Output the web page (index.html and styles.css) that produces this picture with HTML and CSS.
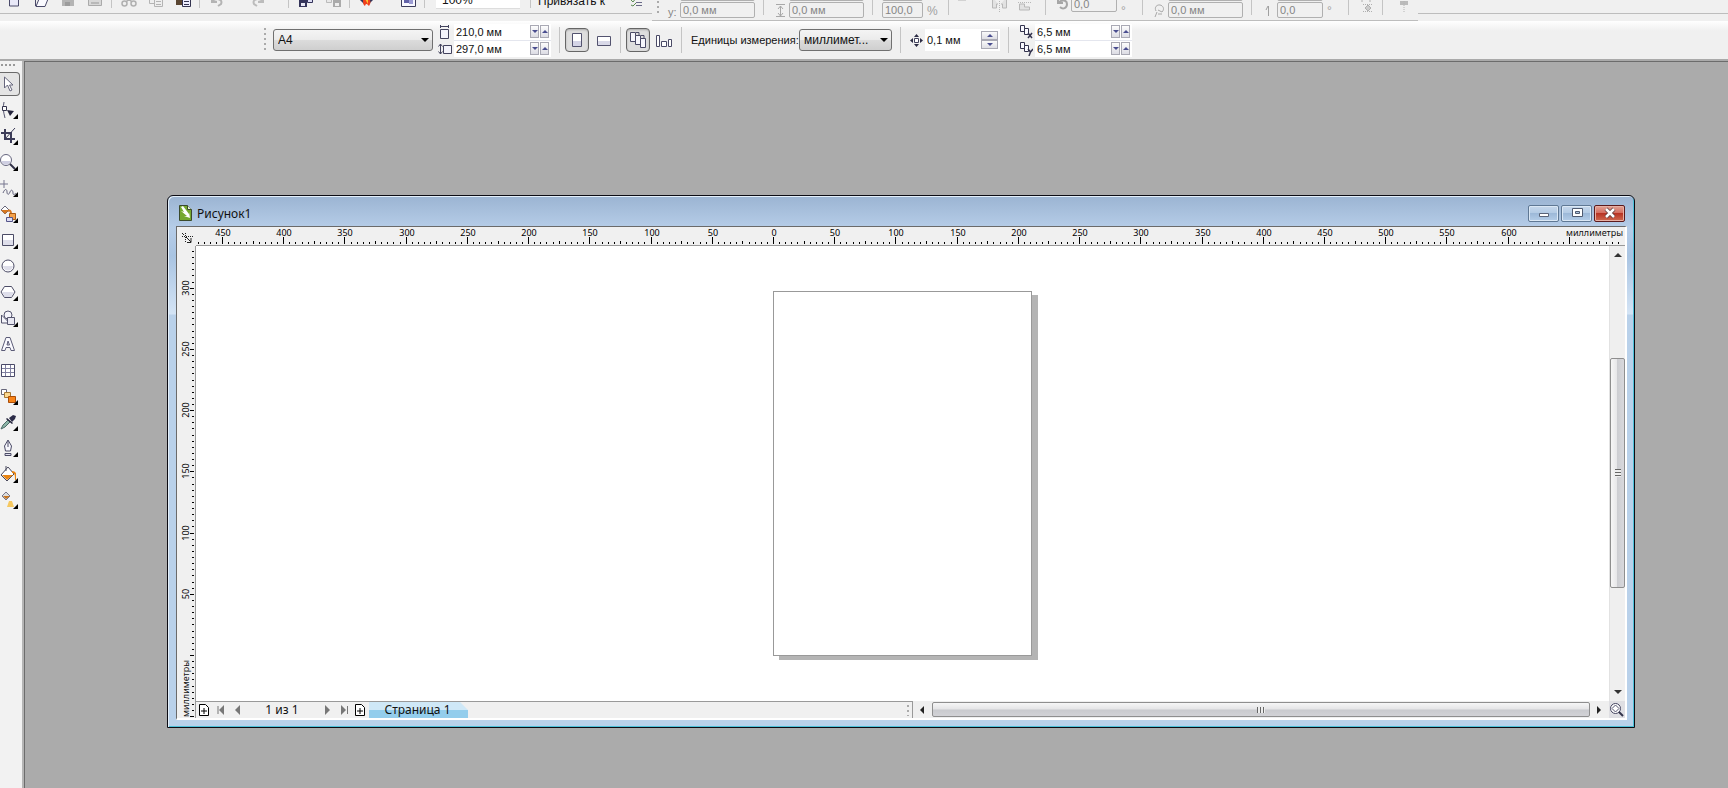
FILE: index.html
```html
<!DOCTYPE html>
<html lang="ru">
<head>
<meta charset="utf-8">
<title>Рисунок1</title>
<link rel="stylesheet" href="styles.css">
</head>
<body>
<div class="app">
  <header class="bars">
    <div class="strip">
      <div class="standard" role="toolbar" aria-label="Стандартная">
        <button class="tb" aria-label="Создать"><svg width="16" height="16"><path d="M3.500-2v17h9V-2" fill="#e9e9f8" stroke="#4a4a6a"/></svg></button>
        <button class="tb" aria-label="Открыть"><svg width="16" height="16"><path d="M2.500 15V8M3 15.500h9l3-7.500H6z" fill="#fafaff" stroke="#4a4a6a"/></svg></button>
        <button class="tb" aria-label="Сохранить" disabled><svg width="16" height="16"><path d="M2 3h12v12H2z" fill="#b4b4b4"/><path d="M5 11h5v4H5z" fill="#9c9c9c"/></svg></button>
        <button class="tb" aria-label="Печать" disabled><svg width="16" height="16"><path d="M1.500 8.500h13v6h-13z" fill="#d8d8d8" stroke="#aaa"/><path d="M4 12h8" stroke="#999"/></svg></button>
        <span class="sep"></span>
        <button class="tb" aria-label="Вырезать" disabled><svg width="16" height="16" fill="none" stroke="#b0b0b0" stroke-width="1.500"><circle cx="3.500" cy="12.500" r="2.500"/><circle cx="12.500" cy="12.500" r="2.500"/><path d="M5 11 11 5M11 11 5 5"/></svg></button>
        <button class="tb" aria-label="Копировать" disabled><svg width="16" height="16" fill="#eee" stroke="#b4b4b4"><path d="M1.500 3.500h8v9h-8z"/><path d="M6.500 6.500h8v9h-8zM8 10.500h5M8 13.500h5"/></svg></button>
        <button class="tb" aria-label="Вставить"><svg width="16" height="16"><path d="M1 2h9v12H1z" fill="#5a4632"/><path d="M7.500 5.500h8v10h-8z" fill="#eef" stroke="#33334f"/><path d="M9 10.500h5M9 13.500h5" stroke="#33334f"/></svg></button>
        <span class="sep"></span>
        <button class="tb" aria-label="Отменить" disabled><svg width="16" height="16" fill="none" stroke="#b4b4b4" stroke-width="2"><path d="M3 10c6-4 11-1 9 3l-3 2"/><path d="M3 6v5h5" /></svg></button>
        <span class="drop"></span>
        <button class="tb" aria-label="Повторить" disabled><svg width="16" height="16" fill="none" stroke="#bcbcbc" stroke-width="2"><path d="M13 10c-6-4-11-1-9 3l3 2"/><path d="M13 6v5H8"/></svg></button>
        <span class="drop"></span>
        <span class="sep"></span>
        <button class="tb" aria-label="Импорт"><svg width="16" height="16"><path d="M1 7h8v9H1z" fill="#34345a"/><path d="M3 12h4v3H3z" fill="#e8e8f4"/><path d="M9.500 5.500h5v6h-5z" fill="#dcdcf4" stroke="#34345a"/></svg></button>
        <button class="tb" aria-label="Экспорт" disabled><svg width="16" height="16"><path d="M1.500 5.500h5v6h-5z" fill="#e8e8e8" stroke="#bbb"/><path d="M8 7h8v9H8z" fill="#ababab"/><path d="M10 12h4v3h-4z" fill="#eee"/></svg></button>
        <span class="sep"></span>
        <button class="tb" aria-label="Запуск приложений"><svg width="16" height="16"><path d="M1 9h13l-4 4H5z" fill="#34345a"/><path d="M4 9c0 5 1 5 2 6 1-3 2-2 4 0 1-2 2-3 1-6z" fill="#f0401c"/><path d="M6 8h3v5z" fill="#ffc030"/></svg></button>
        <span class="drop"></span>
        <button class="tb" aria-label="Экран приветствия"><svg width="16" height="16"><path d="M1.500 2.500h14v13h-14z" fill="#f8f8ff" stroke="#3c3c5c"/><path d="M4 4h8v8H4z" fill="#6262a8"/><path d="M9 8h4v5H9z" fill="#9c9cd4"/></svg></button>
        <span class="sep"></span>
        <span class="zoombox"><select aria-label="Масштаб"><option>100%</option></select></span>
        <span class="sep far"></span>
        <span class="snap">Привязать к</span>
        <span class="drop"></span>
        <button class="tb" aria-label="Параметры"><svg width="16" height="16" fill="none"><path d="m3 9 2 2 3-4m-5 7 2 1 3-3" stroke="#5a8a50"/><path d="M8 11.500h6M8 14.500h6" stroke="#6a6a88"/></svg></button>
      </div>
      <div class="transform" role="toolbar" aria-label="Преобразование">
        <span class="grip"></span>
        <label class="pre" for="ty">y:</label>
        <span class="pair w75"><input aria-label="x" value="0,0 мм" disabled><input id="ty" value="0,0 мм" disabled></span>
        <span class="sep"></span>
        <span class="ico i18"><svg width="9" height="14"><path d="M0 .5h9M0 12.500h9M4.500 2v10M2 5l2.500-3L7 5M2 9l2.500 3L7 9" fill="none" stroke="#a8a8a8"/></svg></span>
        <span class="pair w75"><input aria-label="Ширина" value="0,0 мм" disabled><input aria-label="Высота" value="0,0 мм" disabled></span>
        <span class="sep"></span>
        <span class="pair w42"><input aria-label="Масштаб по x" value="100,0" disabled><input aria-label="Масштаб по y" value="100,0" disabled></span>
        <span class="unit">%</span>
        <span class="sep"></span>
        <span class="ico i36 up"><svg width="8" height="14"><path d="M0 0h8v1.500H0z" fill="#b4b4b4"/></svg></span>
        <span class="ico i27 up"><svg width="15" height="14" fill="#e2e2e2" stroke="#b8b8b8"><path d="M.5-2v11h4V5H6M14.500-2v11h-4V5H9"/><path d="M7.500 0v13" stroke-dasharray="1 1"/></svg></span>
        <span class="ico i24 up"><svg width="14" height="14" fill="#e2e2e2" stroke="#b8b8b8"><path d="M0 3.500h14" stroke-dasharray="1 1"/><path d="M1.500 5v6h10v-3h-5V5z"/></svg></span>
        <span class="sep"></span>
        <span class="ico i18 up"><svg width="13" height="13" fill="none" stroke="#a6a6a6" stroke-width="2"><path d="M2-2v5h5M2 3c4-4 9-3 9 1s-4 6-7 3"/></svg></span>
        <span class="pair w46 raise"><input aria-label="Угол поворота" value="0,0" disabled></span>
        <span class="unit up">°</span>
        <span class="sep"></span>
        <span class="ico i18"><svg width="11" height="14" fill="none" stroke="#a8a8a8"><path d="M2 7C0 3 3 .5 6 1s5 4 2 7L4 6M3 8l-2 5M4 10h4"/></svg></span>
        <span class="pair w75"><input aria-label="Центр x" value="0,0 мм" disabled><input aria-label="Центр y" value="0,0 мм" disabled></span>
        <span class="sep"></span>
        <span class="ico i18"><svg width="6" height="14"><path d="M3.500 12V2M3 2 1 6" fill="none" stroke="#a0a0a0"/></svg></span>
        <span class="pair w46"><input aria-label="Наклон x" value="0,0" disabled><input aria-label="Наклон y" value="0,0" disabled></span>
        <span class="unit">°</span>
        <span class="sep"></span>
        <span class="ico i18 up"><svg width="14" height="14" fill="none" stroke="#b0b0b0"><path d="M0 0h4v3M8 0h4v3"/><path d="M5 5.500h10M5 12.500h10" stroke-dasharray="1 1"/><path d="m10 6 3 3-3 3-3-3z" fill="#ccc"/></svg></span>
        <span class="sep"></span>
        <span class="ico i27 up"><svg width="10" height="14"><path d="M1 2h8v4H1z" fill="#bbb"/><path d="M5 0v14" stroke="#b4b4b4" stroke-dasharray="1 1"/></svg></span>
      </div>
      <div class="rest"></div>
    </div>
    <div class="props" role="toolbar" aria-label="Панель свойств">
      <span class="grip"></span>
      <span class="combo paper"><select aria-label="Размер бумаги"><option>A4</option></select></span>
      <div class="icons2">
        <svg width="14" height="14" fill="none" stroke="#44445e"><path d="M2.500 4.500h8v9h-8z" fill="#f4f4fb"/><path d="M2.500 0v3M10.500 0v3M3 1.500h7"/></svg>
        <svg width="14" height="14" fill="none" stroke="#44445e"><path d="M5.500 3.500h8v8h-8z" fill="#f4f4fb"/><path d="M2.500 2v10M.5 4.500l2-2.500 2 2.500M.5 9.500l2 2.500 2-2.500"/></svg>
      </div>
      <div class="spins">
        <div class="spin"><input aria-label="Ширина страницы" value="210,0 мм"><button aria-label="Меньше"><i class="dn"></i></button><button aria-label="Больше"><i class="upa"></i></button></div>
        <div class="spin"><input aria-label="Высота страницы" value="297,0 мм"><button aria-label="Меньше"><i class="dn"></i></button><button aria-label="Больше"><i class="upa"></i></button></div>
      </div>
      <span class="line"></span>
      <button class="pb on" aria-label="Книжная" aria-pressed="true"><svg width="22" height="22"><path d="M6.500 4.500h9v13h-9z" fill="#fff" stroke="#53536f"/><path d="M7 12h8v5H7z" fill="#d4d4e6"/></svg></button>
      <button class="pb" aria-label="Альбомная"><svg width="22" height="22"><path d="M4.500 7.500h13v9h-13z" fill="#fff" stroke="#53536f"/><path d="M5 12h12v4H5z" fill="#d9d9e8"/></svg></button>
      <span class="line"></span>
      <button class="pb on" aria-label="Все страницы" aria-pressed="true"><svg width="22" height="22" fill="#f6f6fc" stroke="#4a4a66"><path d="M3.500 3.500h5v9h-5z"/><path d="M8.500 6.500h5v9h-5z"/><path d="M13.500 9.500h5v9h-5z"/><path d="M9 3.500h3v3M14 6.500h3v3" fill="none"/></svg></button>
      <button class="pb" aria-label="Текущая страница"><svg width="22" height="22" fill="#fff" stroke="#4a4a66"><path d="M2.500 6.500h3v11h-3zM7.500 12.500h5v5h-5zM14.500 10.500h3v7h-3z"/></svg></button>
      <span class="line"></span>
      <label class="caption" for="units">Единицы измерения:</label>
      <span class="combo units"><select id="units"><option>миллимет...</option></select></span>
      <span class="line"></span>
      <svg class="nudge" width="13" height="13"><path d="M4.500 4.500h4v4h-4z" fill="#fff" stroke="#44445e"/><path d="M6.500 0 9 3H4zM6.500 13 9 10H4zM0 6.500 3 4v5zM13 6.500 10 4v5z" fill="#2c2c44"/></svg>
      <div class="single"><input aria-label="Шаг перемещения" value="0,1 мм"><span class="stack"><button aria-label="Больше"><i class="upa"></i></button><button aria-label="Меньше"><i class="dn"></i></button></span></div>
      <span class="line"></span>
      <div class="icons2">
        <svg width="14" height="14" fill="#fafaff" stroke="#34344e"><path d="M1.500.5h4v6h-4z"/><path d="M5.500 3.500h4v6h-4z"/><path d="m9 8 4 5m0-5-4 5" stroke-width="1.500"/></svg>
        <svg width="14" height="14" fill="#fafaff" stroke="#34344e"><path d="M1.500.5h4v6h-4z"/><path d="M5.500 3.500h4v6h-4z"/><path d="m9 7 2.500 3L14 7m-2.500 3L10 14" fill="none" stroke-width="1.500"/></svg>
      </div>
      <div class="spins">
        <div class="spin"><input aria-label="Дубликат x" value="6,5 мм"><button aria-label="Меньше"><i class="dn"></i></button><button aria-label="Больше"><i class="upa"></i></button></div>
        <div class="spin"><input aria-label="Дубликат y" value="6,5 мм"><button aria-label="Меньше"><i class="dn"></i></button><button aria-label="Больше"><i class="upa"></i></button></div>
      </div>
    </div>
  </header>

  <div class="body">
    <nav class="tools" aria-label="Инструменты">
      <span class="hgrip"></span>
      <button class="tool on" aria-label="Указатель"><svg width="16" height="16"><path d="M4.500 1v11l3-3 2.500 6 2-1-2.500-5H13z" fill="#fff" stroke="#66667c"/></svg></button>
      <button class="tool fly" aria-label="Форма"><svg width="16" height="16"><path d="M4 0c-1 5-1 9 1 16" fill="none" stroke="#55556f"/><path d="M2.500 4.500h4v4h-4z" fill="#fff" stroke="#33334d"/><path d="m7 8 7 1-4 5z" fill="#25253d"/></svg></button>
      <button class="tool fly" aria-label="Обрезка"><svg width="16" height="16" fill="none" stroke="#3c3c58" stroke-width="2"><path d="M5 1v10h10M1 5h10v10"/><path d="M15 0 5 11" stroke-width="1"/></svg></button>
      <button class="tool fly" aria-label="Масштаб"><svg width="16" height="16"><circle cx="6" cy="6" r="5.500" fill="#fff" stroke="#66667f"/><path d="M1.500 7h9c-1 5-8 5-9 0z" fill="#cfcfe2"/><path d="m10 10 5 5" stroke="#33334a" stroke-width="2"/></svg></button>
      <button class="tool fly" aria-label="Свободная форма"><svg width="16" height="16" fill="none" stroke="#65657f"><path d="M4 0v8M0 4h8" stroke="#77778f"/><path d="M3 13c2-5 4-4 4-1s2 3 3 0 3-2 3 1 2 1 3 0"/></svg></button>
      <button class="tool fly" aria-label="Интеллектуальная заливка"><svg width="16" height="16"><path d="m1 4 4-4 4 4-4 4z" fill="#fff" stroke="#66667a"/><path d="M1 4h8L5 8z" fill="#d87820"/><path d="M8 5c2-1 3 0 3 3" fill="none" stroke="#d87820" stroke-width="2"/><path d="M9.500 7.500h6v6h-6z" fill="#f3a04a" stroke="#a85a14"/><path d="M6.500 11.500h6v4h-6z" fill="#dcdcf2" stroke="#55558a"/></svg></button>
      <button class="tool fly" aria-label="Прямоугольник"><svg width="16" height="16"><path d="M2.500 2.500h11v11h-11z" fill="#fff" stroke="#4c4c66"/><path d="M3 8h10v5H3z" fill="#dedeea"/></svg></button>
      <button class="tool fly" aria-label="Эллипс"><svg width="16" height="16"><circle cx="8" cy="8" r="6" fill="#fff" stroke="#4c4c66"/><path d="M3 8h10c-1 6-9 6-10 0z" fill="#dedeea"/></svg></button>
      <button class="tool fly" aria-label="Многоугольник"><svg width="16" height="16"><path d="M4.500 2.500h7l3.500 5.500-3.500 5.500h-7L1 8z" fill="#fff" stroke="#4c4c66"/><path d="M2 8h12l-3 5H5z" fill="#dedeea"/></svg></button>
      <button class="tool fly" aria-label="Основные фигуры"><svg width="16" height="16" fill="#f4f4fa" stroke="#55556f"><path d="M1.500 5v8h8z"/><circle cx="8" cy="5" r="4"/><path d="M7.500 7.500h7v7h-7z" fill="#e8e8f2"/></svg></button>
      <button class="tool" aria-label="Текст"><svg width="16" height="16"><path d="M1.500 14.500 6 1.500h4l4.500 13h-3.500l-1-3H6l-1 3zM7 9h2.500L8 5z" fill="#fafaff" stroke="#5c5c78"/></svg></button>
      <button class="tool" aria-label="Таблица"><svg width="16" height="16"><path d="M1.500 2.500h13v12h-13z" fill="#fff" stroke="#4a4a68"/><path d="M5.500 3v11M10.500 3v11M2 6.500h12M2 10.500h12" stroke="#8080a0"/></svg></button>
      <button class="tool fly" aria-label="Перетекание"><svg width="16" height="16"><path d="M1.500 1.500h5v5h-5z" fill="#fff" stroke="#66667a"/><path d="M4.500 4.500h6v5h-6z" fill="#fcd890" stroke="#a47836"/><path d="M8.500 8.500h7v6h-7z" fill="#f88418" stroke="#a84c08"/></svg></button>
      <button class="tool fly" aria-label="Пипетка"><svg width="16" height="16"><path d="m1 15 2-4 5-5 2 2-5 5z" fill="#8bb4a6" stroke="#4c6a66"/><path d="m7 4 6 5-1 1-6-5z" fill="#22223a"/><path d="m9 4 4-3 3 1-1 3-3 3z" fill="#2c2c48"/></svg></button>
      <button class="tool fly" aria-label="Абрис"><svg width="16" height="16"><path d="M8 0 4.500 6l1 5h5l1-5z" fill="#f6f6fc" stroke="#4a4a66"/><path d="M8 1v6M5 13.500h6v2H5z" fill="#e0e0ee" stroke="#4a4a66"/></svg></button>
      <button class="tool fly" aria-label="Заливка"><svg width="16" height="16"><path d="m1 9 7-8 6 7-7 7z" fill="#fff" stroke="#4a4a5e"/><path d="M2 9h11l-6 5z" fill="#e88412"/><path d="M12 6c4 0 4 3 4 8" fill="none" stroke="#e88412" stroke-width="2"/><path d="M6 0v5" stroke="#4a4a5e"/></svg></button>
      <button class="tool fly" aria-label="Интерактивная заливка"><svg width="16" height="16"><path d="m2 4 4-4 4 4-4 4z" fill="#ddd" stroke="#77778a"/><path d="M3 4h7L6 7z" fill="#c8741c"/><path d="M9 9h3l2 6H7z" fill="#f6c860"/></svg></button>
    </nav>

    <main class="desk">
      <section class="win" aria-label="Рисунок1">
        <div class="title">
          <svg width="13" height="16"><path d="M.5.5h8l4 4v11H.500z" fill="#74a82e" stroke="#3a4a2c"/><path d="M8.500.5v4h4" fill="#e8f2d8" stroke="#3a4a2c"/><path d="m2 2 2-1 6 8V7l1 6-6-2h3L2 6l3 1z" fill="#fff"/></svg>
          <h1>Рисунок1</h1>
          <button class="wb" aria-label="Свернуть"><svg width="28" height="16"><path d="M9.500 8.500h9v3h-9z" fill="#fff" stroke="#5a6478"/></svg></button>
          <button class="wb" aria-label="Развернуть"><svg width="28" height="16"><path d="M9.500 3.500h10v8h-10z" fill="#fff" stroke="#4f5a70"/><path d="M12.500 6.500h4v2h-4z" fill="#a9c2dd" stroke="#4f5a70"/></svg></button>
          <button class="wb close" aria-label="Закрыть"><svg width="28" height="16"><path d="m10 4 8 8m0-8-8 8" stroke="#5b3838" stroke-width="4"/><path d="m10 4 8 8m0-8-8 8" stroke="#fff" stroke-width="2.500"/></svg></button>
        </div>
        <div class="client">
          <div class="corner"><svg width="18" height="18" fill="none" stroke="#222"><path d="M5 9.500h11M8.500 6v10" stroke-dasharray="1 1"/><path d="m5 6 2 2M9 10l5 5M14 11v4.500h-4"/></svg></div>
          <div class="hruler"><svg id="hr" width="100%" height="100%"></svg><span>миллиметры</span></div>
          <div class="vruler"><svg id="vr" width="100%" height="100%"></svg><span>миллиметры</span></div>
          <div class="canvas" id="canvas"><div class="page"></div></div>
          <div class="vscroll" role="scrollbar" aria-label="Прокрутка по вертикали" aria-orientation="vertical" aria-controls="canvas" aria-valuenow="45">
            <button aria-label="Вверх"><i class="ab"></i></button><div class="track"><div class="thumb"><b></b></div></div><button aria-label="Вниз"><i class="bb"></i></button>
          </div>
          <div class="foot">
            <div class="pages">
              <button class="pg add" aria-label="Добавить страницу"><svg width="10" height="12"><path d="M.5.5h6l3 3v8h-9z" fill="#fff" stroke="#000"/><path d="M5 4v6M2 7h6" stroke="#000"/></svg></button>
              <button class="pg" aria-label="Первая"><svg width="8" height="10"><path d="M1 1v8" stroke="#777"/><path d="M7 0v10L2 5z" fill="#777"/></svg></button>
              <button class="pg" aria-label="Предыдущая"><svg width="8" height="10"><path d="M6 0v10L1 5z" fill="#777"/></svg></button>
              <span class="count">1 из 1</span>
              <button class="pg" aria-label="Следующая"><svg width="8" height="10"><path d="M2 0v10l5-5z" fill="#777"/></svg></button>
              <button class="pg" aria-label="Последняя"><svg width="8" height="10"><path d="M7.500 1v8" stroke="#777"/><path d="M1 0v10l5-5z" fill="#777"/></svg></button>
              <button class="pg add" aria-label="Добавить страницу после"><svg width="10" height="12"><path d="M.5.5h6l3 3v8h-9z" fill="#fff" stroke="#000"/><path d="M5 4v6M2 7h6" stroke="#000"/></svg></button>
              <button class="tab">Страница 1</button>
              <span class="grip small"></span>
            </div>
            <div class="hscroll" role="scrollbar" aria-label="Прокрутка по горизонтали" aria-orientation="horizontal" aria-controls="canvas" aria-valuenow="50">
              <button aria-label="Влево"><i class="lb"></i></button><div class="thumb"><b></b></div><button aria-label="Вправо"><i class="rb"></i></button>
            </div>
          </div>
          <button class="navi" aria-label="Навигатор"><svg width="14" height="14" fill="none"><circle cx="5.500" cy="5.500" r="5" stroke="#44445f" fill="#fff"/><path d="m5.500 2 3.500 3.500L5.500 9 2 5.500z" stroke="#55556f"/><path d="m9 9 4 4" stroke="#33334a" stroke-width="2"/></svg></button>
        </div>
      </section>
    </main>
  </div>
</div>
<script src="rulers.js"></script>
</body>
</html>
```
FILE: styles.css
```css
* { box-sizing: border-box; }
body { margin: 0; font: 11px "Noto Sans", "DejaVu Sans", sans-serif; color: #111; background: #ababab; }
button, input, select { font: inherit; color: inherit; margin: 0; padding: 0; border: 0; border-radius: 0; background: none; outline: 0; }
button { display: flex; align-items: center; justify-content: center; flex: none; }
svg { display: block; flex: none; }
select { appearance: none; width: 100%; height: 100%; }
.app { display: flex; flex-direction: column; height: 100vh; overflow: hidden; }

/* upper strip */
.bars { background: #f0f0f0; flex: none; font-family: "Liberation Sans", sans-serif; }
.strip { display: flex; align-items: flex-start; height: 21px; overflow: hidden; }
.standard { display: flex; align-items: flex-end; width: 652px; height: 14px; flex: none; border-bottom: 1px solid #bdbdbd; }
.standard > * { flex: none; }
.tb { width: 27px; height: 20px; align-items: flex-end; padding-bottom: 6px; }
.sep { width: 7px; height: 18px; margin-bottom: 5px; background: linear-gradient(#c4c4c4, #c4c4c4) center / 1px 100% no-repeat; }
.drop { width: 14px; height: 14px; background: linear-gradient(#222, #222) 6px 0 / 2px 1px no-repeat; }
.zoombox { width: 84px; height: 22px; margin: 0 7px 4px 8px; background: #fff; padding-left: 6px; border-bottom: 1px solid #ddd; position: relative; }
.zoombox select { height: 26px; line-height: 16px; font-size: 12px; margin-top: 0; }
.zoombox::after { content: ""; position: absolute; right: 6px; bottom: 8px; border: 4px solid transparent; border-top-color: #000; border-bottom: 0; }
.snap { font-size: 12px; line-height: 16px; width: 64px; margin: 0 6px 4px 4px; white-space: nowrap; }
.transform { display: flex; align-items: flex-end; height: 21px; width: 766px; flex: none; border-bottom: 1px solid #bdbdbd; color: #858585; }
.transform > * { flex: none; }
.transform .sep { height: 30px; margin-left: 1px; width: 15px; }
.rest { flex: 1; height: 14px; border-bottom: 1px solid #bdbdbd; }
.grip { width: 3px; height: 26px; margin-left: 4px; background: radial-gradient(circle at 2px 2px, #aaa 1px, transparent 1px) 0 0 / 3px 5px; }
.transform .grip { margin-bottom: 4px; }
.pre { width: 20px; margin-left: 1px; padding-left: 8px; line-height: 16px; }
.pair { display: flex; flex-direction: column; gap: 1px; margin-bottom: 2px; }
.pair input { width: 100%; height: 16px; border: 1px solid #b0b0b0; border-radius: 2px; background: #f0f0f0; padding-left: 2px; }
.w75 { width: 75px; } .w46 { width: 46px; }
.w42 { width: 41px; margin-left: 2px; }
.raise { margin-bottom: 8px; }
.unit { width: 17px; padding-left: 4px; line-height: 16px; margin-bottom: 1px; color: #a0a0a0; font-size: 12px; }
.ico { display: flex; justify-content: center; margin-bottom: 2px; }
.ico.up { margin-bottom: 7px; }
.i18 { width: 18px; } .i24 { width: 24px; } .i27 { width: 27px; } .i36 { width: 12px; margin-right: 18px; }

/* property bar */
.props { display: flex; align-items: center; height: 40px; padding-left: 259px; border-bottom: 2px solid #aaa; background: linear-gradient(#fff, #f0f0f0 10px); }
.props > * { flex: none; }
.combo { position: relative; height: 22px; border: 1px solid #707070; border-radius: 3px; background: linear-gradient(#f4f4f4, #ebebeb 49%, #dcdcdc 50%, #cfcfcf); }
.combo select { padding-left: 4px; font-size: 12px; }
.combo::after { content: ""; position: absolute; right: 3px; top: 8px; border: 4px solid transparent; border-top-color: #000; border-bottom: 0; pointer-events: none; }
.props > .grip { margin-left: 4px; margin-right: 7px; }
.paper { width: 160px; }
.units { width: 93px; }
.icons2 { display: flex; flex-direction: column; gap: 3px; width: 15px; margin: 0 1px 0 5px; }
.spins { display: flex; flex-direction: column; gap: 1px; width: 97px; background: #e4e6ee; }
.spin { display: flex; align-items: center; gap: 1px; height: 16px; background: #fff; padding-right: 2px; }
.spin input { flex: 1; width: 0; min-width: 0; padding-left: 2px; height: 16px; }
.spin button { width: 9px; height: 13px; border: 1px solid #a9a9b4; background: linear-gradient(#fdfdfd, #dcdce4); }
.dn, .upa { display: block; border: 3px solid transparent; }
.dn { border-top: 3px solid #4a4e90; border-bottom: 0; }
.upa { border-bottom: 3px solid #4a4e90; border-top: 0; }
.line { width: 1px; height: 26px; margin: 0 5px 0 8px; background: #c4c4c4; }
.pb { width: 24px; height: 24px; margin-right: 2px; border: 1px solid transparent; border-radius: 4px; }
.pb.on { border-color: #666; background: #dedede; box-shadow: inset 0 1px 2px #aaa; margin-right: 3px; }
.pb + .line { margin-left: 2px; }
.caption { width: 108px; margin-left: 4px; white-space: nowrap; font-size: 11px; }
.nudge { margin: 0 2px 0 4px; }
.single { display: flex; align-items: center; width: 75px; height: 22px; background: #fff; padding-right: 2px; }
.single input { flex: 1; width: 0; min-width: 0; height: 20px; padding-left: 2px; }
.stack button { width: 17px; height: 9px; border: 1px solid #a9a9b4; background: linear-gradient(#fafafa, #dedee4); }

/* toolbox and desktop */
.body { display: flex; flex: 1; min-height: 0; }
.tools { display: flex; flex-direction: column; width: 24px; flex: none; background: #f2f2f2; border-right: 2px solid #b4b4b4; }
.hgrip { height: 3px; margin: 3px 5px 4px 0; background: radial-gradient(circle at 2px 1px, #999 1px, transparent 1px) 0 0 / 4px 3px; }
.tool { position: relative; width: 20px; height: 26px; padding-right: 4px; }
.tool.on { height: 24px; margin: 1px 0; border: 1px solid #6a6a6a; border-left: 0; border-radius: 0 4px 4px 0; background: #e4e4e4; padding-right: 3px; }
.fly::after { content: ""; position: absolute; right: 2px; bottom: 4px; border-left: 5px solid transparent; border-bottom: 5px solid #000; }
.desk { position: relative; flex: 1; min-width: 0; background: #ababab; border: solid #6c6c6c; border-width: 1px 0 0 1px; }

/* document window */
.win { position: absolute; left: 142px; right: 93px; top: 133px; bottom: 60px; display: flex; flex-direction: column; padding: 0 7px 7px 8px; border: 1px solid #0c0c14; border-radius: 6px 6px 0 0; background: linear-gradient(#9bb4d2, #b6cde8 32px, #a9c4e2 60px, #d4e4f5 118px, #b9d1ea 119px); box-shadow: inset 1px 1px #e4f0fa, inset -1px -1px #4cc0d8; }
.title { display: flex; align-items: center; height: 30px; flex: none; padding: 4px 2px 0 3px; gap: 3px; }
.title h1 { flex: 1; margin: 0; padding: 2px 0 0 2px; font-size: 12px; font-weight: 400; line-height: 16px; }
.wb { width: 31px; height: 17px; border: 1px solid #5f7894; border-radius: 2px; background: linear-gradient(#c6d8ec, #b2cae4 50%, #9db9d8 50%, #b4cde8); box-shadow: inset 0 0 0 1px #dbe8f5; }
.wb + .wb { margin-left: -1px; }
.wb.close { border-color: #5c1a1c; background: linear-gradient(#e2a396, #d3685a 50%, #b83424 50%, #cf6a50); box-shadow: inset 0 0 0 1px #e8b0a4; }
.client { flex: 1; min-height: 0; display: grid; grid-template: 19px 1fr 17px / 19px minmax(0, 1fr) 16px; border: 1px solid #6a6a6a; border-right: 2px solid #fff; border-bottom: 2px solid #fff; background: #f0f0f0; }
.corner { grid-area: 1 / 1; }
.hruler { grid-area: 1 / 2 / 2 / 4; position: relative; overflow: hidden; border-bottom: 1px solid #999; }
.vruler { grid-area: 2 / 1 / 4 / 2; position: relative; overflow: hidden; border-right: 1px solid #999; }
.hruler svg text, .vruler svg text { font: 9px "Noto Sans", sans-serif; fill: #000; text-anchor: middle; }
.hruler span { position: absolute; right: 2px; top: 0; font-size: 9px; line-height: 12px; }
.vruler span { position: absolute; left: 3px; bottom: 1px; font-size: 9px; line-height: 12px; writing-mode: vertical-rl; transform: rotate(180deg); }
.canvas { grid-area: 2 / 2; display: flex; align-items: center; justify-content: center; background: #fff; overflow: hidden; }
.page { width: 259px; height: 365px; background: #fff; border: 1px solid #999; box-shadow: 6px 4px #b4b4b4; }
.vscroll { grid-area: 2 / 3; display: flex; flex-direction: column; border-left: 1px solid #e2e2e2; background: #efefef; }
.vscroll > button { height: 18px; }
.track { flex: 1; display: grid; grid-template-rows: 94fr 230fr 95fr; }
.thumb { display: flex; align-items: center; justify-content: center; border: 1px solid #8e8e8e; border-radius: 2px; }
.track .thumb { grid-row: 2; background: linear-gradient(90deg, #f6f6f6, #e6e6e8 48%, #cdced2 50%, #d8d8dc); }
.thumb b { width: 8px; height: 6px; background: repeating-linear-gradient(90deg, #666 0 1px, #eee 1px 3px); }
.track .thumb b { width: 6px; height: 8px; background: repeating-linear-gradient(#666 0 1px, #eee 1px 3px); }
.ab, .bb { border: 4px solid transparent; }
.ab { border-top: 0; border-bottom-color: #333; }
.bb { border-bottom: 0; border-top-color: #333; }
.lb, .rb { border: 4px solid transparent; }
.lb { border-left: 0; border-right-color: #222; }
.rb { border-right: 0; border-left-color: #222; }
.foot { grid-area: 3 / 2; display: flex; min-width: 0; }
.pages { display: flex; align-items: center; flex: 715 1 0; min-width: 0; border-top: 1px solid #999; border-right: 1px solid #999; padding-right: 3px; }
.pg { width: 17px; height: 16px; }
.pg.add { width: 16px; }
.count { width: 72px; text-align: center; font-size: 12px; line-height: 16px; }
.tab { width: 99px; height: 16px; margin-left: 1px; padding-right: 2px; font-size: 12px; line-height: 16px; background: linear-gradient(#cfe8f7 50%, #93cdec 51%); clip-path: polygon(0 0, 91px 0, 99px 8px, 99px 100%, 0 100%); }
.grip.small { height: 12px; margin-left: auto; }
.hscroll { display: flex; flex: 697 1 0; min-width: 0; background: #efefef; }
.hscroll > button { width: 19px; padding-right: 2px; }
.hscroll .thumb { flex: 1; margin: 1px 0; background: linear-gradient(#f6f6f6, #e4e4e6 48%, #c9cace 52%, #d2d2d6); }
.navi { grid-area: 3 / 3; background: #dfdfe3; }
```
FILE: rulers.js
```js
const NS = 'http://www.w3.org/2000/svg';
const STEP = 6.1222; // screen pixels for 5 mm

function add(svg, name, attrs, text) {
  const el = document.createElementNS(NS, name);
  for (const key in attrs) el.setAttribute(key, attrs[key]);
  if (text !== undefined) el.textContent = text;
  svg.appendChild(el);
}

function draw() {
  const canvas = document.getElementById('canvas');
  const page = canvas.firstElementChild;
  const hr = document.getElementById('hr');
  const vr = document.getElementById('vr');
  hr.replaceChildren();
  vr.replaceChildren();

  const width = hr.parentNode.clientWidth;
  const zeroX = Math.round((canvas.clientWidth - page.offsetWidth) / 2);
  for (let i = -Math.floor(zeroX / STEP); zeroX + i * STEP < width - 3; i++) {
    const x = zeroX + Math.round(i * STEP);
    const h = i % 10 === 0 ? 7 : i % 5 === 0 ? 3 : 2;
    add(hr, 'rect', { x, y: 17 - h, width: 1, height: h });
    if (i % 10 === 0 && x > 10 && x < width - 70) add(hr, 'text', { x: x + 1, y: 9 }, Math.abs(i * 5));
  }

  const height = vr.parentNode.clientHeight;
  const zeroY = Math.round((canvas.clientHeight + page.offsetHeight) / 2) - 1;
  for (let i = -Math.floor((height - zeroY) / STEP); zeroY - i * STEP > 3; i++) {
    const y = zeroY - Math.round(i * STEP);
    const w = i % 10 === 0 ? 4 : 2;
    add(vr, 'rect', { x: 17 - w, y, width: w, height: 1 });
    if (i % 10 === 0 && i > 0) add(vr, 'text', { transform: `translate(12 ${y}) rotate(-90)` }, i * 5);
  }
}

draw();
window.addEventListener('resize', draw);
```
